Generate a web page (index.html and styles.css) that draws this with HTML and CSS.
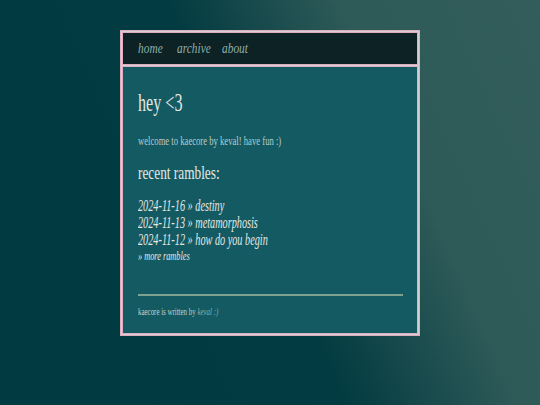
FILE: index.html
```html
<!DOCTYPE html>
<html>
<head>
<meta charset="utf-8">
<link rel="stylesheet" href="styles.css">
</head>
<body>
<div class="site">
  <nav class="nav">
    <a href="#" class="cond">home</a>
    <a href="#" class="cond">archive</a>
    <a href="#" class="cond">about</a>
  </nav>
  <main class="main">
    <h1 class="title"><span class="cond">hey &lt;3</span></h1>
    <p class="welcome"><span class="cond">welcome to kaecore by keval! have fun :)</span></p>
    <h2 class="sub"><span class="cond">recent rambles:</span></h2>
    <ul class="posts">
      <li><span class="cond">2024-11-16 » destiny</span></li>
      <li><span class="cond">2024-11-13 » metamorphosis</span></li>
      <li><span class="cond">2024-11-12 » how do you begin</span></li>
    </ul>
    <p class="more"><span class="cond">» more rambles</span></p>
    <hr class="rule">
    <p class="foot"><span class="cond">kaecore is written by <em>keval :)</em></span></p>
  </main>
</div>
</body>
</html>
```
FILE: styles.css
```css
html, body {
  margin: 0;
  height: 100%;
}
body {
  background: linear-gradient(66deg, #013a40 0%, #023b41 48%, #2e5a58 72%, #325d5b 100%);
  font-family: "Liberation Serif", "DejaVu Serif", serif;
  padding-top: 30px;
  box-sizing: border-box;
}
.site {
  width: 296px;
  margin-left: 120px;
  border: 1px solid #dcaec0;
  background: #d6cfd3;
  padding: 1px;
}
.cond {
  display: inline-block;
  transform: scaleX(var(--sx, 0.78));
  transform-origin: left center;
  white-space: nowrap;
}
.nav {
  background: #0d2224;
  border: 1px solid #dcaec0;
  height: 31px;
  display: flex;
  align-items: center;
  padding-left: 15px;
}
.nav a {
  --sx: 0.76;
  color: #8fb0ab;
  font-style: italic;
  font-size: 15px;
  text-decoration: none;
}
.nav a:nth-child(1) { width: 39px; }
.nav a:nth-child(2) { width: 45px; }
.main {
  margin-top: 1px;
  background: #135a62;
  border: 1px solid #dcaec0;
  padding: 21px 14px 15px 15px;
  color: #e4e8e2;
}
.title {
  --sx: 0.62;
  margin: 0;
  font-size: 26px;
  font-weight: normal;
  line-height: 30px;
}
.welcome {
  --sx: 0.72;
  margin: 16px 0 0;
  font-size: 12px;
  color: #b9cbc9;
  line-height: 14px;
}
.sub {
  --sx: 0.70;
  margin: 14px 0 0;
  font-size: 19px;
  font-weight: normal;
  line-height: 22px;
}
.posts {
  --sx: 0.64;
  list-style: none;
  margin: 13px 0 0;
  padding: 0;
}
.posts li {
  font-style: italic;
  font-size: 16px;
  line-height: 17px;
}
.more {
  --sx: 0.69;
  margin: 1px 0 0;
  font-style: italic;
  font-size: 12px;
  line-height: 14px;
}
.rule {
  margin: 31px 0 0;
  border: 0;
  height: 2px;
  background: #7fa28f;
}
.foot {
  --sx: 0.69;
  margin: 10px 0 0;
  font-size: 10px;
  color: #c2d0cf;
  line-height: 12px;
}
.foot em {
  color: #8db2ad;
}
```
